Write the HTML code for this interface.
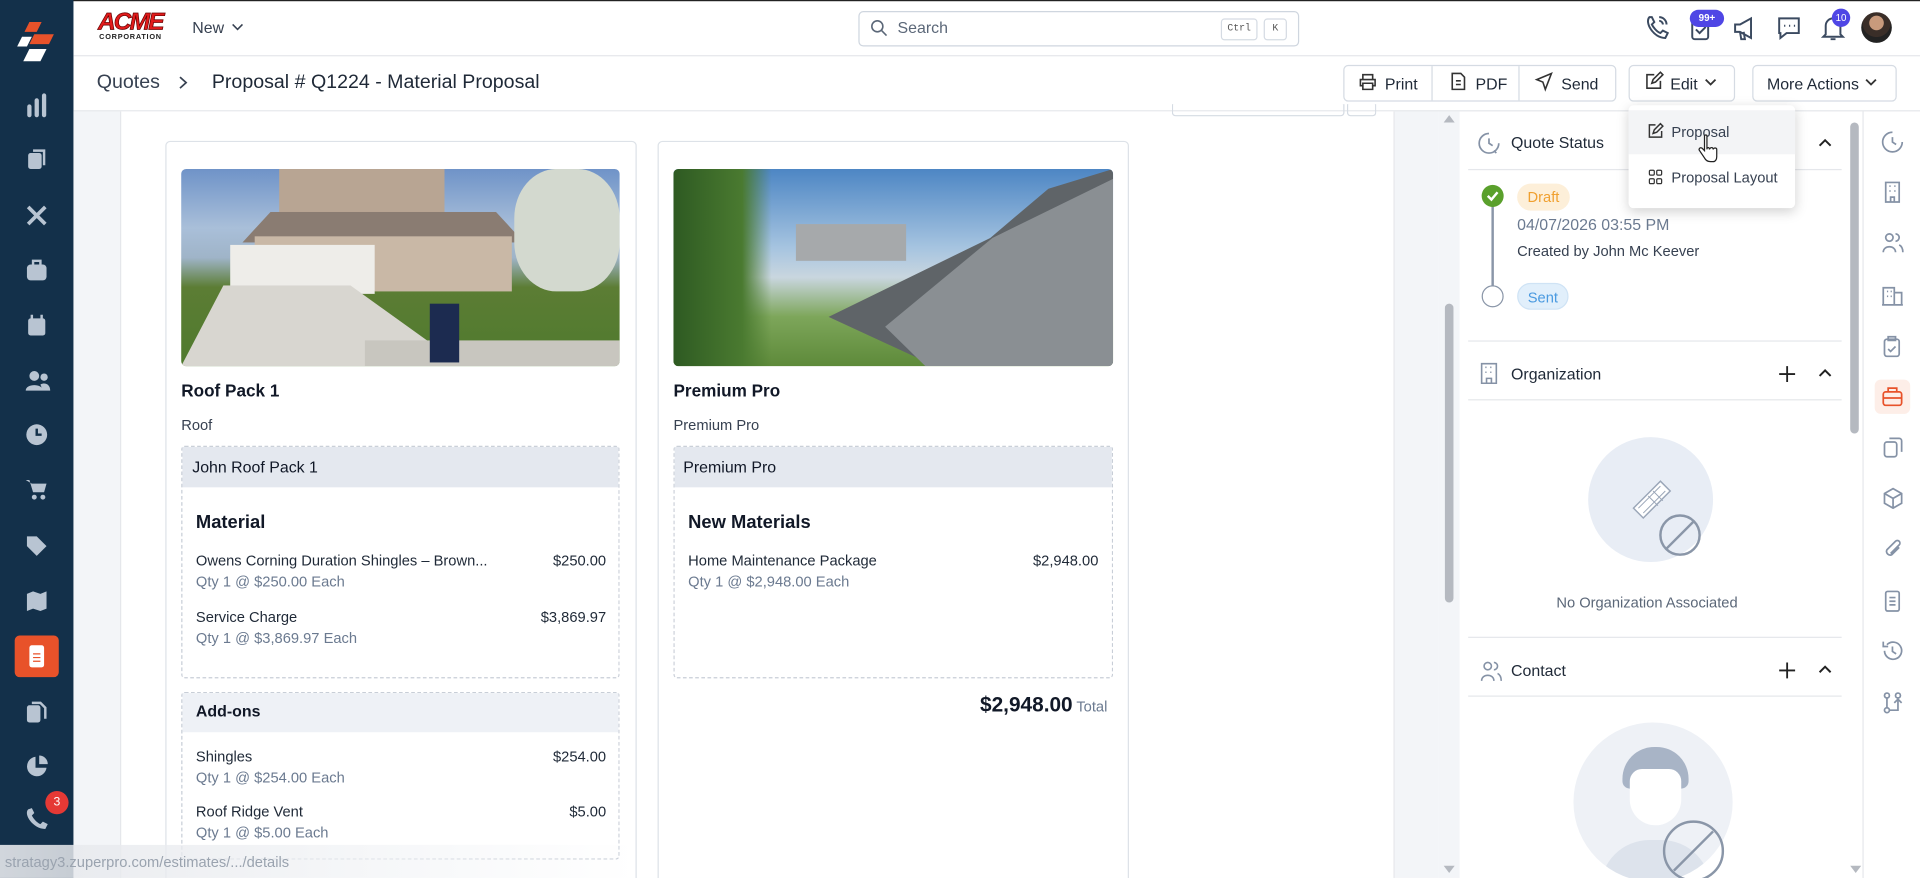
<!DOCTYPE html>
<html><head><meta charset="utf-8"><style>
*{box-sizing:border-box;margin:0;padding:0}
html,body{width:1920px;height:878px;overflow:hidden;background:#fff;font-family:"Liberation Sans",sans-serif;color:#1f2937}
#w{position:absolute;left:0;top:0;width:1568px;height:717px;transform:scale(1.22449);transform-origin:0 0;overflow:hidden;background:#fff}
.a{position:absolute}
.t{position:absolute;white-space:nowrap}
.r{position:absolute;white-space:nowrap;text-align:right}
svg{position:absolute;overflow:visible}
.sb svg{fill:none;stroke:#b8c4d2;stroke-width:2}
.ri svg{fill:none;stroke:#8592a6;stroke-width:1.4}
.hd svg{fill:none;stroke:#3b4a60;stroke-width:1.6}
.btn{position:absolute;border:1px solid #d5dbe3;border-radius:4px;background:#fff;height:29px;font-size:13px;color:#1f2937}
.gray{color:#6b7a90}
</style></head><body><div id="w">
<div class="a" style="left:0;top:0;width:1568px;height:1px;background:#222"></div>
<!-- sidebar -->
<div class="a sb" style="left:0;top:0;width:60px;height:717px;background:#13304a">
 <svg style="left:14px;top:16px" width="32" height="36" viewBox="0 0 32 36"><path d="M10 2h10l-4 8H6z" fill="#e8522a" stroke="none"/><path d="M14 12h16l-4 8H10z" fill="#e8522a" stroke="none"/><path d="M4 14h8l-4 8H0z" fill="#fff" stroke="none"/><path d="M10 24h14l-5 10H5z" fill="#fff" stroke="none"/></svg>
 <svg style="left:22px;top:77px" width="16" height="18"><path d="M2 17V10M8 17V5M14 17V1" stroke-width="3.5" stroke-linecap="round"/></svg>
 <svg style="left:22px;top:121px" width="16" height="18"><rect x="1" y="4" width="11" height="13" rx="2" fill="#b8c4d2" stroke="none"/><path d="M5 2h9v12"/></svg>
 <svg style="left:21px;top:167px" width="18" height="18"><path d="M2 16L16 2M2 2l14 14" stroke-width="3"/></svg>
 <svg style="left:21px;top:212px" width="18" height="18"><rect x="1" y="4" width="16" height="13" rx="3" fill="#b8c4d2" stroke="none"/><path d="M6 4V1h6v3"/></svg>
 <svg style="left:22px;top:257px" width="16" height="18"><rect x="1" y="3" width="14" height="14" rx="2" fill="#b8c4d2" stroke="none"/><path d="M4 0v4M12 0v4"/></svg>
 <svg style="left:21px;top:302px" width="20" height="18"><circle cx="7" cy="5" r="4" fill="#b8c4d2" stroke="none"/><circle cx="15" cy="6" r="3" fill="#b8c4d2" stroke="none"/><path d="M0 17c0-6 14-6 14 0zM12 12c4-2 8 0 8 5h-6" fill="#b8c4d2" stroke="none"/></svg>
 <svg style="left:21px;top:346px" width="18" height="18"><circle cx="9" cy="9" r="8.5" fill="#b8c4d2" stroke="none"/><path d="M9 4v5h4" stroke="#13304a"/></svg>
 <svg style="left:21px;top:391px" width="18" height="18"><path d="M0 1h3l3 10h9l2-7H5" fill="#b8c4d2" stroke="none"/><circle cx="7" cy="15" r="2" fill="#b8c4d2" stroke="none"/><circle cx="14" cy="15" r="2" fill="#b8c4d2" stroke="none"/></svg>
 <svg style="left:21px;top:437px" width="18" height="18"><path d="M1 1h8l8 8-8 8-8-8z" fill="#b8c4d2" stroke="none"/></svg>
 <svg style="left:21px;top:482px" width="18" height="18"><path d="M1 3l5-2 6 2 5-2v14l-5 2-6-2-5 2z" fill="#b8c4d2" stroke="none"/></svg>
 <div class="a" style="left:12px;top:519px;width:36px;height:34px;background:#e8522a;border-radius:4px"></div>
 <svg style="left:24px;top:527px" width="12" height="18"><rect x="0" y="0" width="12" height="18" rx="2" fill="#fff" stroke="none"/><path d="M3 7h6M3 10h6M3 13h6" stroke="#e8522a" stroke-width="1"/></svg>
 <svg style="left:21px;top:571px" width="18" height="20"><rect x="1" y="5" width="11" height="14" rx="2" fill="#b8c4d2" stroke="none"/><path d="M5 3h7l4 4v9" /></svg>
 <svg style="left:21px;top:617px" width="18" height="18"><path d="M8 1a8 8 0 1 0 9 9H8z" fill="#b8c4d2" stroke="none"/><path d="M11 0a7 7 0 0 1 7 7h-7z" fill="#b8c4d2" stroke="none"/></svg>
 <svg style="left:20px;top:660px" width="20" height="20"><path d="M3 1c-4 4 4 16 14 16l2-4-4-2-2 2c-3-1-6-5-7-7l2-2-2-4z" fill="#b8c4d2" stroke="none"/></svg>
 <div class="a" style="left:37px;top:646px;width:19px;height:19px;background:#e53935;border-radius:50%;color:#fff;font-size:10px;text-align:center;line-height:19px">3</div>
</div>
<!-- header -->
<div class="a" style="left:60px;top:45px;width:1508px;height:1px;background:#e5e7eb"></div>
<div class="t" style="left:80px;top:8px;font:italic bold 20px/20px 'Liberation Sans',sans-serif;color:#e21b1b;letter-spacing:-1.5px;-webkit-text-stroke:.6px #600">ACME</div>
<div class="t" style="left:81px;top:28px;font:bold 6px/6px 'Liberation Sans';color:#222;letter-spacing:.6px">CORPORATION</div>
<div class="t" style="left:157px;top:15px;font-size:13px;color:#374151">New</div>
<svg style="left:190px;top:20px" width="8" height="5"><path d="M0 0l4 4 4-4" fill="none" stroke="#374151" stroke-width="1.3"/></svg>
<div class="a" style="left:701px;top:9px;width:360px;height:29px;border:1px solid #cfd6df;border-radius:4px"></div>
<svg style="left:711px;top:16px" width="13" height="14"><circle cx="5.5" cy="5.5" r="4.5" fill="none" stroke="#5b6778" stroke-width="1.3"/><path d="M9 9l4 4" stroke="#5b6778" stroke-width="1.3"/></svg>
<div class="t" style="left:733px;top:15px;font-size:13px;color:#5b6778">Search</div>
<div class="a" style="left:997px;top:15px;width:30px;height:18px;border:1px solid #d5dbe3;border-radius:3px;font:8px/16px 'Liberation Mono';color:#555;text-align:center">Ctrl</div>
<div class="a" style="left:1032px;top:15px;width:19px;height:18px;border:1px solid #d5dbe3;border-radius:3px;font:8px/16px 'Liberation Mono';color:#555;text-align:center">K</div>
<div class="hd">
 <svg style="left:1343px;top:12px" width="20" height="22"><path d="M4 2c-4 4 3 17 13 17l2-4-4-2-2 2c-3-1-6-5-7-7l2-2-2-4z"/><path d="M12 2a6 6 0 0 1 6 6M12 5a3 3 0 0 1 3 3"/></svg>
 <svg style="left:1380px;top:12px" width="18" height="24"><rect x="2" y="2" width="13" height="18" rx="2"/><path d="M5 12l3 3 5-5"/></svg>
 <svg style="left:1415px;top:13px" width="20" height="20"><path d="M2 7h4l9-5v16l-9-5H2zM6 13l1 6h3l-1-6"/></svg>
 <svg style="left:1451px;top:13px" width="20" height="20"><path d="M2 2h16v12H8l-5 4v-4H2z"/><path d="M6 8h1M10 8h1M14 8h1"/></svg>
 <svg style="left:1488px;top:12px" width="18" height="22"><path d="M3 16V9a6 6 0 0 1 12 0v7l2 2H1zM7 20h4"/></svg>
</div>
<div class="a" style="left:1380px;top:8px;width:28px;height:14px;border-radius:7px;background:#4f46e5;color:#fff;font:bold 8px/14px 'Liberation Sans';text-align:center">99+</div>
<div class="a" style="left:1496px;top:7px;width:15px;height:15px;border-radius:50%;background:#4f46e5;color:#fff;font:8px/15px 'Liberation Sans';text-align:center">10</div>
<div class="a" style="left:1520px;top:10px;width:25px;height:25px;border-radius:50%;background:radial-gradient(circle at 50% 35%,#c89a7c 0 28%,#3a2e28 30% 55%,#222 57%)"></div>
<!-- breadcrumb bar -->
<div class="a" style="left:60px;top:90px;width:1508px;height:1px;background:#e5e7eb"></div>
<div class="t" style="left:79px;top:59px;font-size:16px;color:#374151">Quotes</div>
<svg style="left:146px;top:62px" width="7" height="11"><path d="M1 1l5 4.5L1 10" fill="none" stroke="#374151" stroke-width="1.4"/></svg>
<div class="t" style="left:173px;top:59px;font-size:16px;color:#1f2937">Proposal # Q1224 - Material Proposal</div>
<div class="btn" style="left:1097px;top:53px;width:223px;height:30px"></div>
<div class="a" style="left:1169px;top:54px;width:1px;height:28px;background:#d5dbe3"></div>
<div class="a" style="left:1240px;top:54px;width:1px;height:28px;background:#d5dbe3"></div>
<svg style="left:1110px;top:60px" width="14" height="14"><path d="M3 5V1h8v4M3 10H1V5h12v5h-2M3 8h8v5H3z" fill="none" stroke="#333" stroke-width="1.3"/></svg>
<div class="t" style="left:1131px;top:61px;font-size:13px">Print</div>
<svg style="left:1185px;top:59px" width="12" height="15"><path d="M1 1h7l3 3v10H1zM4 7h4M4 10h4" fill="none" stroke="#333" stroke-width="1.3"/></svg>
<div class="t" style="left:1205px;top:61px;font-size:13px">PDF</div>
<svg style="left:1254px;top:59px" width="14" height="15"><path d="M13 1L1 6l5 2 2 6z" fill="none" stroke="#333" stroke-width="1.3"/></svg>
<div class="t" style="left:1275px;top:61px;font-size:13px">Send</div>
<div class="btn" style="left:1330px;top:53px;width:87px;height:30px"></div>
<svg style="left:1344px;top:59px" width="14" height="14"><path d="M7 2H1v11h11V7M5 9l1-3 6-6 2 2-6 6z" fill="none" stroke="#333" stroke-width="1.3"/></svg>
<div class="t" style="left:1364px;top:61px;font-size:13px">Edit</div>
<svg style="left:1393px;top:65px" width="8" height="5"><path d="M0 0l4 4 4-4" fill="none" stroke="#333" stroke-width="1.5"/></svg>
<div class="btn" style="left:1431px;top:53px;width:118px;height:30px"></div>
<div class="t" style="left:1443px;top:61px;font-size:13px">More Actions</div>
<svg style="left:1524px;top:65px" width="8" height="5"><path d="M0 0l4 4 4-4" fill="none" stroke="#333" stroke-width="1.5"/></svg>
<!-- content -->
<div class="a" style="left:60px;top:91px;width:1115px;height:626px;background:#f3f5f8"></div>
<div class="a" style="left:98px;top:91px;width:1041px;height:626px;background:#fff;border-left:1px solid #e5e7eb;border-right:1px solid #e5e7eb"></div>
<div class="a" style="left:957px;top:85px;width:141px;height:10px;border:1px solid #d5dbe3;border-top:none;border-radius:0 0 3px 3px"></div>
<div class="a" style="left:1100px;top:85px;width:24px;height:10px;border:1px solid #d5dbe3;border-top:none;border-radius:0 0 3px 3px"></div>
<!-- card1 -->
<div class="a" style="left:135px;top:115px;width:385px;height:610px;border:1px solid #dde2e8;border-radius:4px"></div>
<div class="a" style="left:148px;top:138px;width:358px;height:161px;border-radius:4px;overflow:hidden;background:linear-gradient(180deg,#6f93c8 0%,#a9bfd9 30%,#9fb4c8 45%,#5c7d34 60%,#4f7a2e 100%)">
 <div class="a" style="left:80px;top:0;width:135px;height:52px;background:#b8a593"></div>
 <div class="a" style="left:50px;top:35px;width:230px;height:25px;background:#8a7c72;clip-path:polygon(10% 0,90% 0,100% 100%,0 100%)"></div>
 <div class="a" style="left:60px;top:55px;width:210px;height:45px;background:#c9b8a6"></div>
 <div class="a" style="left:40px;top:62px;width:118px;height:40px;background:#eeede9"></div>
 <div class="a" style="left:0;top:95px;width:230px;height:66px;background:#d8d6d0;clip-path:polygon(15% 0,60% 0,100% 100%,0 100%)"></div>
 <div class="a" style="left:150px;top:140px;width:208px;height:21px;background:#c8c6bf"></div>
 <div class="a" style="left:203px;top:110px;width:24px;height:48px;background:#1c2b50"></div>
 <div class="a" style="left:272px;top:0;width:86px;height:100px;border-radius:40%;background:#d3d9cf"></div>
</div>
<div class="t" style="left:148px;top:311px;font:bold 14px 'Liberation Sans';color:#111827">Roof Pack 1</div>
<div class="t" style="left:148px;top:340px;font-size:12px;color:#374151">Roof</div>
<div class="a" style="left:148px;top:364px;width:358px;height:190px;border:1px dashed #c8ced7;border-radius:3px"></div>
<div class="a" style="left:149px;top:365px;width:356px;height:33px;background:#e4e8ef"></div>
<div class="t" style="left:157px;top:374px;font-size:13px;color:#111827">John Roof Pack 1</div>
<div class="t" style="left:160px;top:418px;font:bold 15px 'Liberation Sans';color:#111827">Material</div>
<div class="t" style="left:160px;top:451px;font-size:12px">Owens Corning Duration Shingles – Brown...</div>
<div class="r" style="right:1073px;top:451px;font-size:12px">$250.00</div>
<div class="t gray" style="left:160px;top:468px;font-size:12px">Qty 1 @ $250.00 Each</div>
<div class="t" style="left:160px;top:497px;font-size:12px">Service Charge</div>
<div class="r" style="right:1073px;top:497px;font-size:12px">$3,869.97</div>
<div class="t gray" style="left:160px;top:514px;font-size:12px">Qty 1 @ $3,869.97 Each</div>
<div class="a" style="left:148px;top:565px;width:358px;height:137px;border:1px dashed #c8ced7;border-radius:3px"></div>
<div class="a" style="left:149px;top:566px;width:356px;height:32px;background:#eef1f6"></div>
<div class="t" style="left:160px;top:573px;font:bold 13px 'Liberation Sans';color:#111827">Add-ons</div>
<div class="t" style="left:160px;top:611px;font-size:12px">Shingles</div>
<div class="r" style="right:1073px;top:611px;font-size:12px">$254.00</div>
<div class="t gray" style="left:160px;top:628px;font-size:12px">Qty 1 @ $254.00 Each</div>
<div class="t" style="left:160px;top:656px;font-size:12px">Roof Ridge Vent</div>
<div class="r" style="right:1073px;top:656px;font-size:12px">$5.00</div>
<div class="t gray" style="left:160px;top:673px;font-size:12px">Qty 1 @ $5.00 Each</div>
<!-- card2 -->
<div class="a" style="left:537px;top:115px;width:385px;height:610px;border:1px solid #dde2e8;border-radius:4px"></div>
<div class="a" style="left:550px;top:138px;width:359px;height:161px;border-radius:4px;overflow:hidden;background:linear-gradient(180deg,#4d86c4 0%,#a6c4e0 40%,#c9d6df 55%,#7da65a 75%,#5e8a3a 100%)">
 <div class="a" style="left:0;top:0;width:80px;height:161px;background:linear-gradient(90deg,#2e5a22,#4a7a30 70%,transparent)"></div>
 <div class="a" style="left:100px;top:45px;width:90px;height:30px;background:#a6a9ab"></div>
 <div class="a" style="left:95px;top:0;width:264px;height:161px;background:#5f6468;clip-path:polygon(100% 0,100% 100%,45% 100%,12% 75%,62% 35%,80% 10%)"></div>
 <div class="a" style="left:140px;top:0;width:219px;height:161px;background:#8a8f93;clip-path:polygon(100% 5%,100% 100%,30% 100%,15% 80%,55% 35%)"></div>
</div>
<div class="t" style="left:550px;top:311px;font:bold 14px 'Liberation Sans';color:#111827">Premium Pro</div>
<div class="t" style="left:550px;top:340px;font-size:12px;color:#374151">Premium Pro</div>
<div class="a" style="left:550px;top:364px;width:359px;height:190px;border:1px dashed #c8ced7;border-radius:3px"></div>
<div class="a" style="left:551px;top:365px;width:357px;height:33px;background:#e4e8ef"></div>
<div class="t" style="left:558px;top:374px;font-size:13px;color:#111827">Premium Pro</div>
<div class="t" style="left:562px;top:418px;font:bold 15px 'Liberation Sans';color:#111827">New Materials</div>
<div class="t" style="left:562px;top:451px;font-size:12px">Home Maintenance Package</div>
<div class="r" style="right:671px;top:451px;font-size:12px">$2,948.00</div>
<div class="t gray" style="left:562px;top:468px;font-size:12px">Qty 1 @ $2,948.00 Each</div>
<div class="r" style="right:692px;top:566px;font:bold 17px 'Liberation Sans';color:#111827">$2,948.00</div>
<div class="t gray" style="left:879px;top:570px;font-size:12px">Total</div>
<!-- status bar -->
<div class="a" style="left:0;top:690px;width:520px;height:27px;background:linear-gradient(90deg,rgba(230,232,236,.9),rgba(240,242,245,.6) 60%,rgba(255,255,255,0))"></div>
<div class="t" style="left:4px;top:697px;font-size:12px;color:#9aa3af">stratagy3.zuperpro.com/estimates/.../details</div>
<!-- scrollbar -->
<div class="a" style="left:1175px;top:91px;width:17px;height:626px;background:#f3f5f8"></div>
<div class="a" style="left:1180px;top:248px;width:7px;height:244px;background:#b5b9c0;border-radius:4px"></div>
<svg style="left:1179px;top:94px" width="9" height="6"><path d="M0 6l4.5-6 4.5 6z" fill="#b5b9c0"/></svg>
<svg style="left:1179px;top:707px" width="9" height="6"><path d="M0 0l4.5 6 4.5-6z" fill="#b5b9c0"/></svg>
<div class="a" style="left:1511px;top:100px;width:7px;height:254px;background:#b5b9c0;border-radius:4px"></div>
<svg style="left:1511px;top:707px" width="9" height="6"><path d="M0 0l4.5 6 4.5-6z" fill="#b5b9c0"/></svg>
<!-- right panel -->
<div class="ri">
<svg style="left:1207px;top:108px" width="18" height="18"><path d="M9 1a8 8 0 1 0 8 8M9 5v4l3 2"/><path d="M13 15l2 2"/></svg>
</div>
<div class="t" style="left:1234px;top:109px;font-size:13px;color:#1f2937">Quote Status</div>
<svg style="left:1485px;top:113px" width="11" height="7"><path d="M1 6l4.5-4.5L10 6" fill="none" stroke="#222" stroke-width="1.6"/></svg>
<div class="a" style="left:1199px;top:138px;width:305px;height:1px;background:#e5e7eb"></div>
<div class="a" style="left:1218px;top:166px;width:2px;height:68px;background:#8a96a8"></div>
<div class="a" style="left:1210px;top:151px;width:18px;height:18px;border-radius:50%;background:#5aa02c"></div>
<svg style="left:1214px;top:156px" width="10" height="8"><path d="M1 4l3 3 5-6" fill="none" stroke="#fff" stroke-width="2"/></svg>
<div class="a" style="left:1210px;top:233px;width:18px;height:18px;border-radius:50%;border:1.5px solid #8a96a8;background:#fff"></div>
<div class="a" style="left:1239px;top:150px;width:43px;height:22px;border-radius:11px;background:#fdefd9;color:#f0a030;font-size:12px;text-align:center;line-height:22px">Draft</div>
<div class="t gray" style="left:1239px;top:176px;font-size:13px">04/07/2026 03:55 PM</div>
<div class="t" style="left:1239px;top:198px;font-size:12px;color:#374151">Created by John Mc Keever</div>
<div class="a" style="left:1239px;top:231px;width:42px;height:22px;border-radius:11px;background:#e1effb;color:#4a9ae0;font-size:12px;text-align:center;line-height:22px;border:1px solid #cfe3f5">Sent</div>
<div class="a" style="left:1199px;top:278px;width:305px;height:1px;background:#e5e7eb"></div>
<svg style="left:1209px;top:296px" width="14" height="18"><path d="M1 17V1h12v16zM4 4h1M8 4h1M4 8h1M8 8h1M5 17v-4h4v4" fill="none" stroke="#8592a6" stroke-width="1.3"/></svg>
<div class="t" style="left:1234px;top:298px;font-size:13px">Organization</div>
<svg style="left:1453px;top:299px" width="13" height="13"><path d="M6.5 0v13M0 6.5h13" stroke="#222" stroke-width="1.5"/></svg>
<svg style="left:1485px;top:301px" width="11" height="7"><path d="M1 6l4.5-4.5L10 6" fill="none" stroke="#222" stroke-width="1.6"/></svg>
<div class="a" style="left:1199px;top:326px;width:305px;height:1px;background:#e5e7eb"></div>
<div class="a" style="left:1297px;top:357px;width:102px;height:102px;border-radius:50%;background:#e8edf5"></div>
<svg style="left:1330px;top:385px" width="60" height="70"><path d="M4 30l22-22 8 8-22 22z" fill="#fff" stroke="#9aa6b8" stroke-width="1.2"/><path d="M8 30l18-18M12 34l18-18M16 20l8 8M20 16l8 8" stroke="#9aa6b8" stroke-width=".8"/><circle cx="42" cy="52" r="16" fill="none" stroke="#8a96a8" stroke-width="2"/><path d="M31 63l22-22" stroke="#8a96a8" stroke-width="2"/></svg>
<div class="t" style="left:1271px;top:485px;font-size:12px;color:#5b6778">No Organization Associated</div>
<div class="a" style="left:1199px;top:520px;width:305px;height:1px;background:#e5e7eb"></div>
<svg style="left:1209px;top:540px" width="18" height="16"><circle cx="6" cy="4" r="3" fill="none" stroke="#8592a6" stroke-width="1.3"/><path d="M1 16c0-6 10-6 10 0M11 1a3 3 0 0 1 0 6M14 10c2 1 3 3 3 6" fill="none" stroke="#8592a6" stroke-width="1.3"/></svg>
<div class="t" style="left:1234px;top:540px;font-size:13px">Contact</div>
<svg style="left:1453px;top:541px" width="13" height="13"><path d="M6.5 0v13M0 6.5h13" stroke="#222" stroke-width="1.5"/></svg>
<svg style="left:1485px;top:543px" width="11" height="7"><path d="M1 6l4.5-4.5L10 6" fill="none" stroke="#222" stroke-width="1.6"/></svg>
<div class="a" style="left:1199px;top:568px;width:305px;height:1px;background:#e5e7eb"></div>
<div class="a" style="left:1285px;top:590px;width:130px;height:130px;border-radius:50%;background:#eef1f6;overflow:hidden">
 <div class="a" style="left:40px;top:20px;width:54px;height:34px;border-radius:26px 26px 6px 6px;background:#a8b4c6"></div>
 <div class="a" style="left:46px;top:38px;width:42px;height:46px;border-radius:10px 10px 21px 21px;background:#fff"></div>
 <div class="a" style="left:22px;top:96px;width:90px;height:50px;border-radius:40px 40px 0 0;background:#dde3ec"></div>
</div>
<svg style="left:1357px;top:669px" width="52" height="52"><circle cx="26" cy="26" r="24" fill="none" stroke="#8a96a8" stroke-width="2"/><path d="M10 42L42 10" stroke="#8a96a8" stroke-width="2"/></svg>
<!-- right rail -->
<div class="a" style="left:1521px;top:91px;width:1px;height:626px;background:#e5e7eb"></div>
<div class="a" style="left:1531px;top:310px;width:29px;height:28px;background:#fdeee8;border-radius:5px"></div>
<div class="ri">
<svg style="left:1537px;top:107px" width="17" height="18"><path d="M8.5 1a8 8 0 1 0 8 8M8.5 5v4l3 2"/></svg>
<svg style="left:1539px;top:148px" width="13" height="18"><path d="M1 17V1h11v16zM4 4h1M8 4h1M4 8h1M8 8h1M5 17v-4h3v4"/></svg>
<svg style="left:1537px;top:190px" width="17" height="17"><circle cx="6" cy="4" r="3"/><path d="M1 16c0-6 10-6 10 0M11 1a3 3 0 0 1 0 6M14 10c2 1 3 3 3 6"/></svg>
<svg style="left:1537px;top:232px" width="17" height="18"><path d="M1 17V3h9v14M10 7h6v10M4 6h1M7 6h1M4 10h1M7 10h1M0 17h17"/></svg>
<svg style="left:1538px;top:274px" width="14" height="18"><rect x="1" y="3" width="12" height="14" rx="2"/><path d="M4 1h6v3H4zM4 11l2 2 4-4"/></svg>
<svg style="left:1537px;top:315px" width="17" height="17"><rect x="1" y="5" width="15" height="11" rx="2" stroke="#e8522a"/><path d="M5 5V2h7v3M1 10h15" stroke="#e8522a"/></svg>
<svg style="left:1538px;top:357px" width="16" height="17"><rect x="1" y="4" width="10" height="12" rx="2"/><path d="M5 1h8a2 2 0 0 1 2 2v9"/></svg>
<svg style="left:1538px;top:398px" width="16" height="17"><path d="M8 1l7 4v8l-7 4-7-4V5zM1 5l7 4 7-4M8 9v8"/></svg>
<svg style="left:1538px;top:440px" width="16" height="17"><path d="M13 7l-6 6a3 3 0 0 1-4-4l7-7a2 2 0 0 1 3 3l-7 7"/></svg>
<svg style="left:1539px;top:482px" width="13" height="18"><rect x="1" y="1" width="11" height="16" rx="1.5"/><path d="M4 6h5M4 9h5M4 12h5"/></svg>
<svg style="left:1537px;top:523px" width="17" height="17"><path d="M2 8.5a7 7 0 1 0 2-5M1 1v4h4M8.5 5v4l3 2"/></svg>
<svg style="left:1538px;top:565px" width="16" height="18"><circle cx="3" cy="3" r="2"/><circle cx="3" cy="15" r="2"/><circle cx="12" cy="3" r="2"/><path d="M3 5v8M5 15h7V7M9 9l3-3 3 3"/></svg>
</div>
<!-- dropdown -->
<div class="a" style="left:1330px;top:86px;width:136px;height:84px;background:#fff;border-radius:4px;box-shadow:0 3px 10px rgba(0,0,0,.18)"></div>
<div class="a" style="left:1330px;top:90px;width:136px;height:36px;background:#f3f4f6"></div>
<svg style="left:1346px;top:100px" width="13" height="13"><path d="M6 2H1v10h10V7M4 9l1-3 5-5 2 2-5 5z" fill="none" stroke="#333" stroke-width="1.2"/></svg>
<div class="t" style="left:1365px;top:101px;font-size:12px;color:#374151">Proposal</div>
<svg style="left:1346px;top:138px" width="12" height="13"><rect x="1" y="1" width="4" height="4" rx="1" fill="none" stroke="#333"/><rect x="7" y="1" width="4" height="4" rx="1" fill="none" stroke="#333"/><rect x="1" y="8" width="4" height="4" rx="1" fill="none" stroke="#333"/><rect x="7" y="8" width="4" height="4" rx="1" fill="none" stroke="#333"/></svg>
<div class="t" style="left:1365px;top:138px;font-size:12px;color:#374151">Proposal Layout</div>
<svg style="left:1387px;top:110px" width="16" height="24"><path d="M5 1v12l-2-2c-2-1-3 1-2 2l4 6c1 2 3 3 5 3h2c2 0 3-2 3-4v-6c0-1-2-2-3 0 0-2-2-2-3 0 0-2-2-2-2 0V1C7 0 5 0 5 1z" fill="#fff" stroke="#222" stroke-width="1"/></svg>
</div></body></html>
